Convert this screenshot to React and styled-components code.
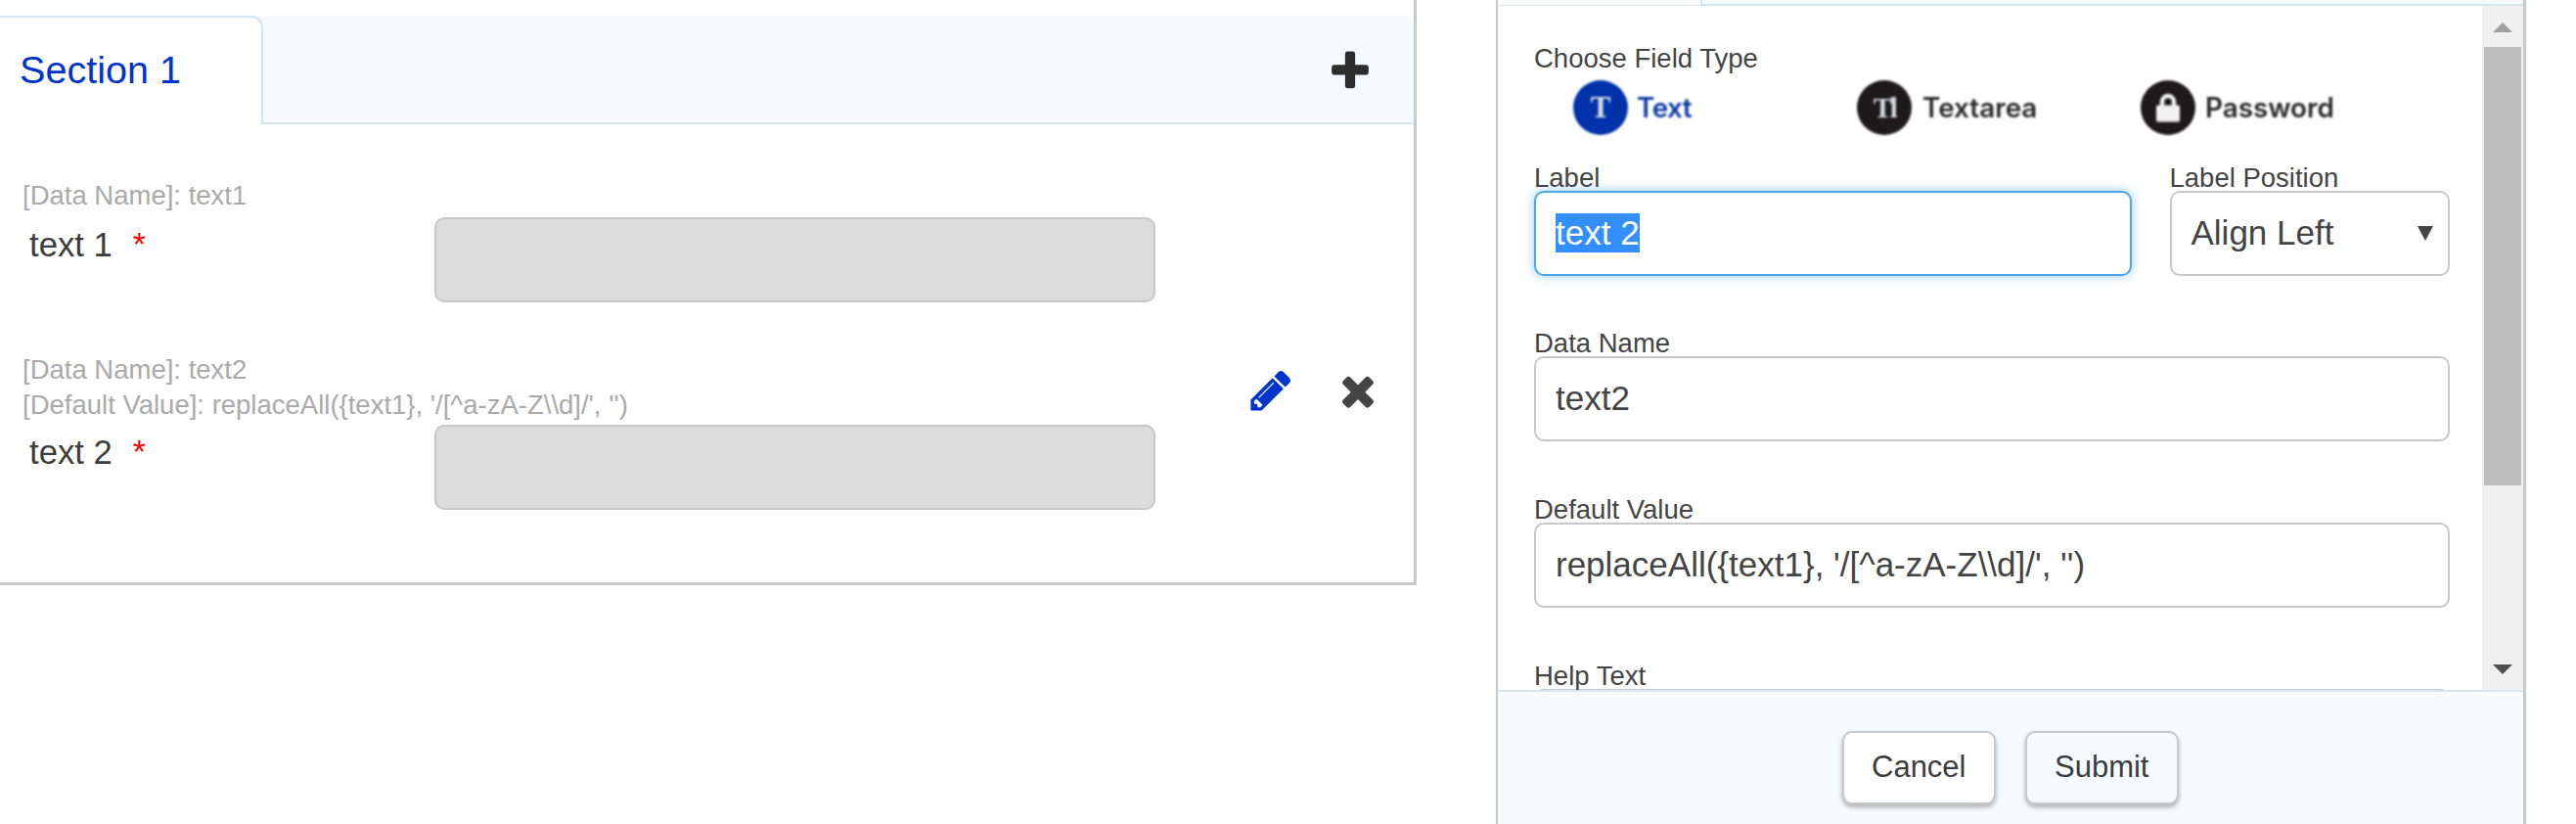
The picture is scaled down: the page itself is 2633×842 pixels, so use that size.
import React from "react";
import styled, { createGlobalStyle } from "styled-components";

const Global = createGlobalStyle`
  html, body { margin: 0; padding: 0; background: #fff; }
  body { font-family: "Liberation Sans", Arial, sans-serif; color: #444; overflow: hidden; }
`;

const Page = styled.div`
  display: flex;
  width: 2633px;
  height: 842px;
  align-items: flex-start;
  overflow: hidden;
`;

/* ---------- left card ---------- */
const Card = styled.section`
  width: 1447.5px;
  height: 598px;
  padding-top: 16px;
  box-sizing: border-box;
  border-right: 3px solid #c9c9c9;
  border-bottom: 3px solid #c9c9c9;
  flex: none;
`;
const SectionHeader = styled.header`
  display: flex;
  justify-content: space-between;
  align-items: center;
  height: 111px;
  box-sizing: border-box;
  background: #f5fbff;
  border-bottom: 2px solid #d3e7f2;
  border-top-right-radius: 12px;
  padding: 5px 40.5px 0 0;
`;
const SectionTab = styled.div`
  display: flex;
  align-items: center;
  align-self: flex-start;
  width: 269px;
  height: 111px;
  margin-top: -5px;
  box-sizing: border-box;
  padding: 0 0 3px 20px;
  background: #fff;
  border-top: 2px solid #d3e7f2;
  border-right: 2px solid #d3e7f2;
  border-top-right-radius: 12px;
  border-bottom-right-radius: 3px;
  font-size: 39.6px;
  color: #0033cc;
`;
const Rows = styled.div`
  padding: 55px 0 0 23px;
  display: flex;
  flex-direction: column;
  gap: 51px;
`;
const Row = styled.div`
  position: relative;
`;
const Meta = styled.div`
  font-size: 27.5px;
  line-height: 36px;
  color: #aaa;
  white-space: nowrap;
`;
const FieldLine = styled.div`
  display: flex;
  margin-top: ${(p) => p.$gap}px;
`;
const FieldName = styled.div`
  width: 420.5px;
  flex: none;
  padding: 7.5px 0 0 7px;
  box-sizing: border-box;
  font-size: 34.7px;
  line-height: 40px;
  color: #3c3c3c;
`;
const Required = styled.span`
  color: #f00;
  margin-left: 21px;
  font-size: 34px;
  line-height: 1;
  vertical-align: 1px;
`;
const DisabledInput = styled.div`
  width: 737px;
  height: 87px;
  box-sizing: border-box;
  background: #dcdcdc;
  border: 2.5px solid #c8c8c8;
  border-radius: 10px;
`;
const Actions = styled.div`
  position: absolute;
  left: 1252px;
  top: 15px;
  display: flex;
  gap: 41px;
`;
const Glyph = styled.svg`
  display: block;
  width: 48px;
  height: 48px;
  fill: ${(p) => p.$color};
`;

/* ---------- right panel ---------- */
const Panel = styled.aside`
  width: 1053.5px;
  height: 842px;
  margin-left: 81px;
  flex: none;
  box-sizing: border-box;
  border-left: 2px solid #c8c8c8;
  border-right: 3px solid #c8c8c8;
  display: flex;
  flex-direction: column;
`;
const TopStrip = styled.div`
  display: flex;
  height: 6px;
  flex: none;
`;
const TopTabEdge = styled.div`
  width: 207px;
  border-bottom: 1px solid #d3e7f2;
`;
const TopRest = styled.div`
  flex: 1;
  background: #f5fbff;
  border-left: 2px solid #d3e7f2;
  border-bottom: 2px solid #d3e7f2;
`;
const ScrollArea = styled.div`
  display: flex;
  height: 698.5px;
  flex: none;
  overflow: hidden;
`;
const Form = styled.div`
  flex: 1;
  padding: 40px 33px 0 37.5px;
  min-width: 0;
`;
const Caption = styled.div`
  font-size: 27.5px;
  line-height: 27px;
  color: #444;
  white-space: nowrap;
`;
const TypeRow = styled.div`
  display: flex;
  margin: 9px 0 29.5px 40px;
  filter: blur(0.8px);
`;
const TypeOption = styled.div`
  display: flex;
  align-items: center;
  width: 290px;
  height: 56px;
  gap: ${(p) => p.$gap}px;
  color: ${(p) => p.$color};
`;
const TypeCircle = styled.div`
  display: flex;
  align-items: center;
  justify-content: center;
  width: 56px;
  height: 56px;
  border-radius: 50%;
  flex: none;
  background: ${(p) => p.$bg};
  color: #d8dbe6;
  font-family: "Liberation Serif", serif;
  font-weight: 700;
  font-size: ${(p) => p.$size || 31}px;
  letter-spacing: ${(p) => p.$spacing || "0"};
`;
const TypeName = styled.span`
  font-family: Inter, sans-serif;
  font-weight: 600;
  font-size: 27.8px;
  letter-spacing: ${(p) => p.$spacing || "0"};
`;
const LabelRow = styled.div`
  display: flex;
  justify-content: space-between;
  margin-bottom: 55px;
`;
const Field = styled.div`
  width: ${(p) => (p.$width ? p.$width + "px" : "auto")};
  margin-bottom: ${(p) => (p.$flush ? 0 : 56)}px;
`;
const InputBox = styled.div`
  display: flex;
  align-items: center;
  justify-content: space-between;
  height: 87px;
  box-sizing: border-box;
  padding: 0 15.5px 0 20px;
  background: #fff;
  border: 2.5px solid ${(p) => (p.$focus ? "#4ea6ea" : "#c8c8c8")};
  border-radius: 10px;
  box-shadow: ${(p) => (p.$focus ? "0 0 11px rgba(78,166,234,.6)" : "none")};
  font-size: 35px;
  color: #444;
  white-space: pre;
`;
const Selected = styled.span`
  background: #338fff;
  color: #fff;
`;
const Caret = styled.span`
  width: 0;
  height: 0;
  border-left: 8px solid transparent;
  border-right: 8px solid transparent;
  border-top: 15px solid #444;
`;
const Track = styled.div`
  position: relative;
  width: 42px;
  flex: none;
  background: #f0f0f0;
`;
const Thumb = styled.div`
  position: absolute;
  left: 2px;
  right: 2px;
  top: 42px;
  height: 448px;
  background: #bdbdbd;
`;
const ArrowUp = styled.div`
  position: absolute;
  left: 11px;
  top: 17px;
  width: 0;
  height: 0;
  border-left: 10px solid transparent;
  border-right: 10px solid transparent;
  border-bottom: 10px solid #a0a0a0;
`;
const ArrowDown = styled.div`
  position: absolute;
  left: 11px;
  top: 673px;
  width: 0;
  height: 0;
  border-left: 10px solid transparent;
  border-right: 10px solid transparent;
  border-top: 10px solid #505050;
`;
const Footer = styled.footer`
  flex: 1;
  display: flex;
  justify-content: center;
  align-items: flex-start;
  gap: 30px;
  padding: 40px 0 0 0;
  box-sizing: border-box;
  background: #f5fbff;
  border-top: 2px solid #d3e7f2;
`;
const Button = styled.button`
  width: 157px;
  height: 75px;
  padding: 0;
  border: 2px solid #c8c8c8;
  border-radius: 10px;
  background: ${(p) => (p.$tinted ? "#f5fbff" : "#fff")};
  box-shadow: 0 3px 5px rgba(0, 0, 0, 0.3);
  font-family: "Liberation Sans", Arial, sans-serif;
  font-size: 31px;
  color: #3c3c3c;
`;

const PLUS = "M1600 736v192q0 40-28 68t-68 28h-416v416q0 40-28 68t-68 28h-192q-40 0-68-28t-28-68v-416h-416q-40 0-68-28t-28-68v-192q0-40 28-68t68-28h416v-416q0-40 28-68t68-28h192q40 0 68 28t28 68v416h416q40 0 68 28t28 68z";
const PENCIL = "M491 1536l91-91-235-235-91 91v107h128v128h107zm523-928q0-22-22-22-10 0-17 7l-542 542q-7 7-7 17 0 22 22 22 10 0 17-7l542-542q7-7 7-17zm-54-192l416 416-832 832h-416v-416zm683 96q0 53-37 90l-166 166-416-416 166-165q36-38 90-38 53 0 91 38l235 234q37 39 37 91z";
const TIMES = "M1490 1322q0 40-28 68l-136 136q-28 28-68 28t-68-28l-294-294-294 294q-28 28-68 28t-68-28l-136-136q-28-28-28-68t28-68l294-294-294-294q-28-28-28-68t28-68l136-136q28-28 68-28t68 28l294 294 294-294q28-28 68-28t68 28l136 136q28 28 28 68t-28 68l-294 294 294 294q28 28 28 68z";

const Icon = ({ d, color }) => (
  <Glyph viewBox="0 0 1792 1792" $color={color}><path d={d} /></Glyph>
);

const Lock = () => (
  <svg width="26" height="30" viewBox="0 0 26 30" style={{ display: "block" }}>
    <path d="M7 14V9a6 6 0 0 1 12 0v5" fill="none" stroke="#f2f2f2" strokeWidth="4.5" />
    <circle cx="13" cy="9.5" r="2.6" fill="#1c1a1a" />
    <rect x="1" y="12.5" width="24" height="17" rx="1.5" fill="#f2f2f2" />
  </svg>
);

export default function App() {
  return (
    <Page>
      <Global />
      <Card>
        <SectionHeader>
          <SectionTab>Section 1</SectionTab>
          <Icon d={PLUS} color="#2d2d2d" />
        </SectionHeader>
        <Rows>
          <Row>
            <Meta>[Data Name]: text1</Meta>
            <FieldLine $gap={4}>
              <FieldName>text 1<Required>*</Required></FieldName>
              <DisabledInput />
            </FieldLine>
          </Row>
          <Row>
            <Meta>[Data Name]: text2</Meta>
            <Meta>[Default Value]: replaceAll({"{text1}"}, '/[^a-zA-Z\\d]/', '')</Meta>
            <FieldLine $gap={2}>
              <FieldName>text 2<Required>*</Required></FieldName>
              <DisabledInput />
            </FieldLine>
            <Actions>
              <Icon d={PENCIL} color="#0033cc" />
              <Icon d={TIMES} color="#444" />
            </Actions>
          </Row>
        </Rows>
      </Card>

      <Panel>
        <TopStrip>
          <TopTabEdge />
          <TopRest />
        </TopStrip>
        <ScrollArea>
          <Form>
            <Caption>Choose Field Type</Caption>
            <TypeRow>
              <TypeOption $gap={9} $color="#0f38a5">
                <TypeCircle $bg="#0033aa">T</TypeCircle>
                <TypeName $spacing="-0.5px">Text</TypeName>
              </TypeOption>
              <TypeOption $gap={11} $color="#2b2929">
                <TypeCircle $bg="#1c1a1a" $spacing="-2.5px" $size={29}>Tl</TypeCircle>
                <TypeName>Textarea</TypeName>
              </TypeOption>
              <TypeOption $gap={10} $color="#2b2929">
                <TypeCircle $bg="#1c1a1a"><Lock /></TypeCircle>
                <TypeName>Password</TypeName>
              </TypeOption>
            </TypeRow>
            <LabelRow>
              <Field $width={611} $flush>
                <Caption>Label</Caption>
                <InputBox $focus><Selected>text 2</Selected></InputBox>
              </Field>
              <Field $width={286.5} $flush>
                <Caption>Label Position</Caption>
                <InputBox>Align Left<Caret /></InputBox>
              </Field>
            </LabelRow>
            <Field>
              <Caption>Data Name</Caption>
              <InputBox>text2</InputBox>
            </Field>
            <Field>
              <Caption>Default Value</Caption>
              <InputBox>replaceAll({"{text1}"}, '/[^a-zA-Z\\d]/', '')</InputBox>
            </Field>
            <Field>
              <Caption>Help Text</Caption>
              <InputBox />
            </Field>
          </Form>
          <Track>
            <ArrowUp />
            <Thumb />
            <ArrowDown />
          </Track>
        </ScrollArea>
        <Footer>
          <Button>Cancel</Button>
          <Button $tinted>Submit</Button>
        </Footer>
      </Panel>
    </Page>
  );
}
